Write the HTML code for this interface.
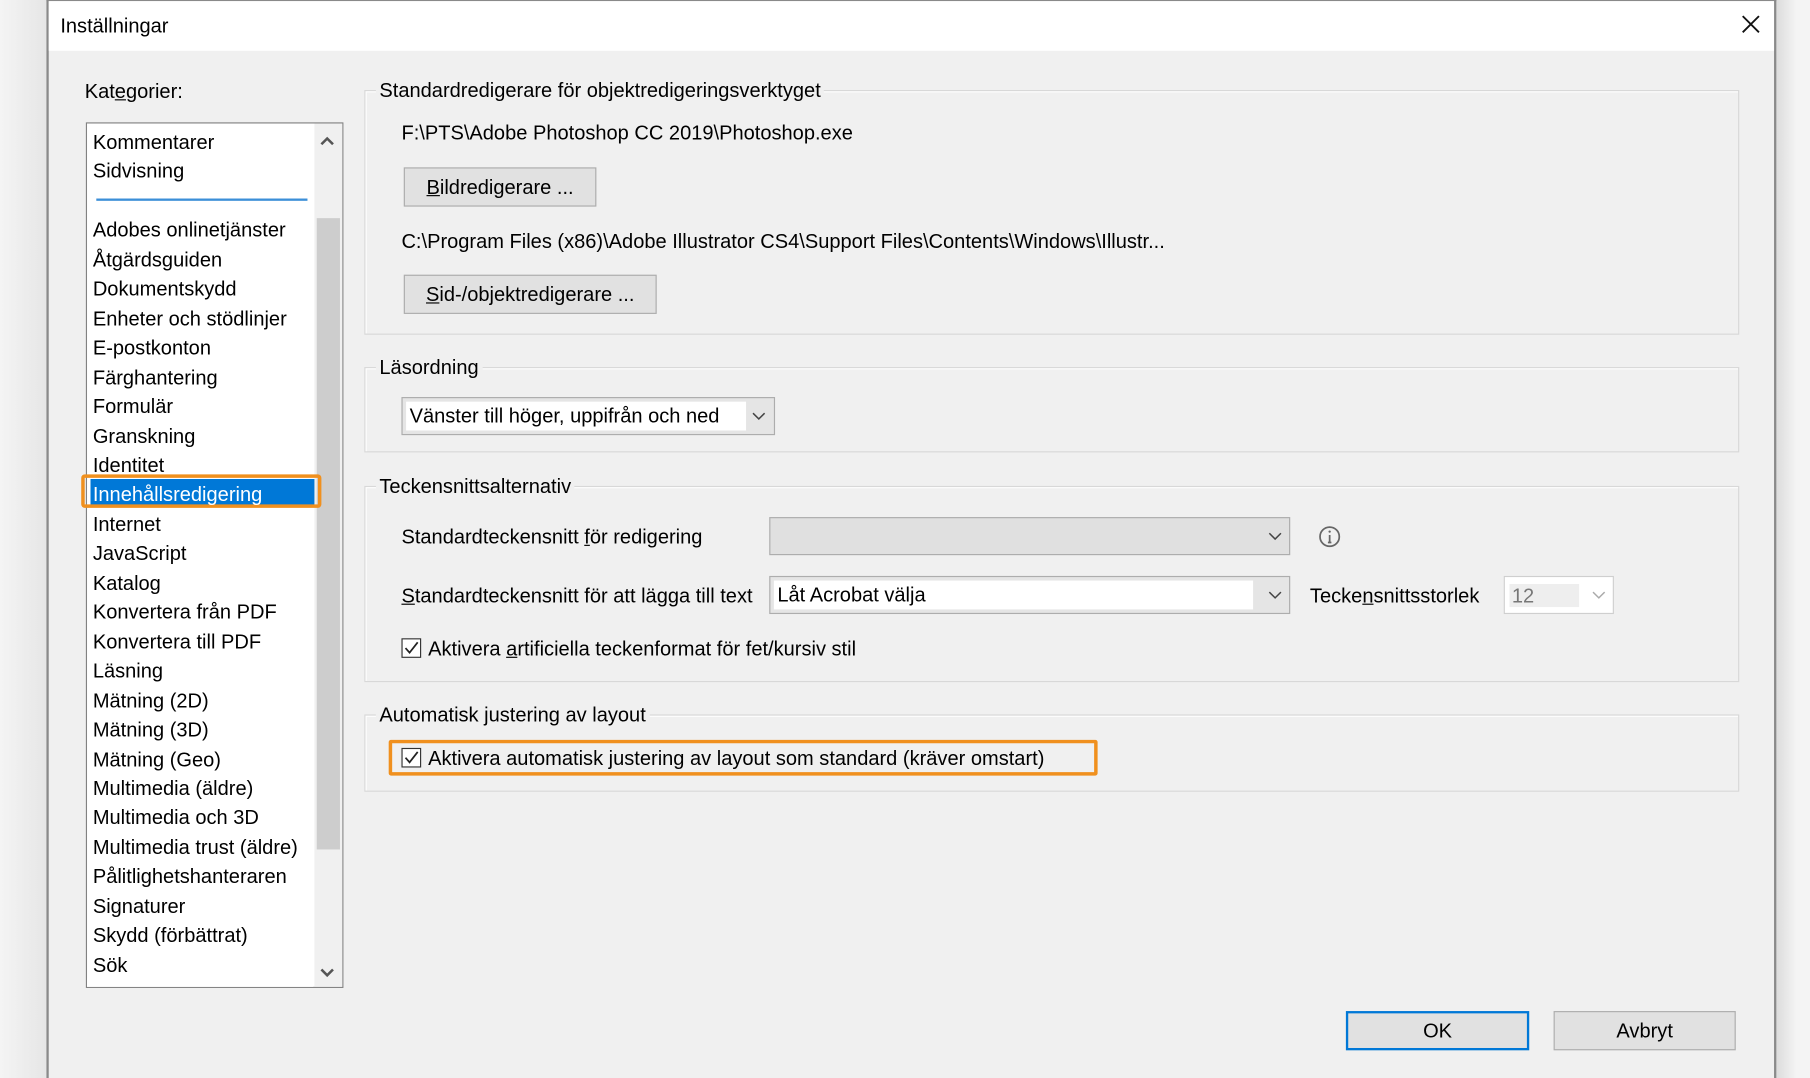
<!DOCTYPE html>
<html><head><meta charset="utf-8"><style>
html,body{margin:0;padding:0;width:1810px;height:1078px;overflow:hidden;background:#f3f3f3;}
#w{position:absolute;left:0;top:0;width:1560px;height:934px;transform-origin:0 0;transform:scale(1.16026,1.15418);font-family:"Liberation Sans",sans-serif;font-size:17.3px;color:#000;}
.a{position:absolute;white-space:nowrap;}
.t{line-height:20px;margin-top:-10px;}
.grp{position:absolute;border:1px solid #d8d8d8;box-shadow:inset 1px 1px 0 #fff;}
.lg{position:absolute;background:#f0f0f0;padding:0 3px;line-height:20px;top:-11px;left:9px;white-space:nowrap;}
.btn{position:absolute;background:#e1e1e1;border:1px solid #adadad;box-sizing:border-box;text-align:center;}
.cb{position:absolute;width:17px;height:17px;border:1px solid #333;background:#fff;box-sizing:border-box;}
u{text-decoration:underline;}
</style></head><body><div id="w">
<div class="a" style="left:0;top:0;width:40px;height:934px;background:linear-gradient(90deg,#f4f4f4,#e6e6e6);"></div>
<div class="a" style="left:1531px;top:0;width:29px;height:934px;background:linear-gradient(90deg,#dcdcdc,#f4f4f4 60%);"></div>
<div class="a" style="left:40px;top:0;width:1491px;height:934px;background:#f0f0f0;border-left:2px solid #8a8a8a;border-right:2px solid #8a8a8a;border-top:1px solid #8a8a8a;box-sizing:border-box;"></div>
<div class="a" style="left:42px;top:1px;width:1487px;height:43px;background:#fff;"></div>
<div class="a t" style="left:52px;top:22px;">Inställningar</div>
<svg class="a" style="left:1500px;top:12px" width="18" height="18"><path d="M2 2L16 16M16 2L2 16" stroke="#111" stroke-width="1.6"/></svg>

<div class="a t" style="left:73px;top:79px;">Kat<u>e</u>gorier:</div>
<div class="a" style="left:74px;top:106px;width:222px;height:750px;background:#fff;border:1px solid #828282;box-sizing:border-box;overflow:hidden;">
 <div class="a" style="left:196px;top:0;width:24px;height:748px;background:#f0f0f0;"></div>
 <div class="a" style="left:198px;top:82px;width:20px;height:547px;background:#cdcdcd;"></div>
 <svg class="a" style="left:200px;top:9px" width="14" height="12"><path d="M2 9L7 4L12 9" stroke="#555" stroke-width="2.2" fill="none"/></svg>
 <svg class="a" style="left:200px;top:730px" width="14" height="12"><path d="M2 3L7 8L12 3" stroke="#555" stroke-width="2.2" fill="none"/></svg>
 <div class="a" style="left:8px;top:65px;width:182px;height:2px;background:#3c8fd8;"></div>
 <div class="a" style="left:3px;top:308px;width:193px;height:23px;background:#0078d7;"></div>
</div>
<div class="a" style="left:70px;top:411px;width:207px;height:29px;border:3px solid #f0901e;border-radius:3px;box-sizing:border-box;"></div>
<div class="a" style="left:80px;top:111px;line-height:25.45px;">
Kommentarer<br>Sidvisning<br><br>Adobes onlinetjänster<br>Åtgärdsguiden<br>Dokumentskydd<br>Enheter och stödlinjer<br>E-postkonton<br>Färghantering<br>Formulär<br>Granskning<br>Identitet<br><span style="color:#fff">Innehållsredigering</span><br>Internet<br>JavaScript<br>Katalog<br>Konvertera från PDF<br>Konvertera till PDF<br>Läsning<br>Mätning (2D)<br>Mätning (3D)<br>Mätning (Geo)<br>Multimedia (äldre)<br>Multimedia och 3D<br>Multimedia trust (äldre)<br>Pålitlighetshanteraren<br>Signaturer<br>Skydd (förbättrat)<br>Sök
</div>
<div class="a" style="left:75px;top:848px;width:195px;height:7px;background:#fff;"></div>

<div class="grp" style="left:314px;top:78px;width:1183px;height:210px;"><div class="lg">Standardredigerare för objektredigeringsverktyget</div></div>
<div class="a t" style="left:346px;top:115px;">F:\PTS\Adobe Photoshop CC 2019\Photoshop.exe</div>
<div class="btn" style="left:348px;top:145px;width:166px;height:34px;line-height:32px;"><u>B</u>ildredigerare ...</div>
<div class="a t" style="left:346px;top:209px;">C:\Program Files (x86)\Adobe Illustrator CS4\Support Files\Contents\Windows\Illustr...</div>
<div class="btn" style="left:348px;top:238px;width:218px;height:34px;line-height:32px;"><u>S</u>id-/objektredigerare ...</div>

<div class="grp" style="left:314px;top:318px;width:1183px;height:72px;"><div class="lg">Läsordning</div></div>
<div class="a" style="left:346px;top:344px;width:322px;height:33px;background:#e5e5e5;border:1px solid #adadad;box-sizing:border-box;">
 <div class="a" style="left:3px;top:3px;width:293px;height:25px;background:#fff;"></div>
 <div class="a" style="left:6px;top:5px;line-height:20px;">Vänster till höger, uppifrån och ned</div>
 <svg class="a" style="left:300px;top:11px" width="14" height="10"><path d="M2 2L7 7L12 2" stroke="#444" stroke-width="1.3" fill="none"/></svg>
</div>

<div class="grp" style="left:314px;top:421px;width:1183px;height:168px;"><div class="lg">Teckensnittsalternativ</div></div>
<div class="a t" style="left:346px;top:465px;">Standardteckensnitt <u>f</u>ör redigering</div>
<div class="a" style="left:663px;top:448px;width:449px;height:33px;background:#e0e0e0;border:1px solid #adadad;box-sizing:border-box;">
 <svg class="a" style="left:428px;top:11px" width="14" height="10"><path d="M2 2L7 7L12 2" stroke="#444" stroke-width="1.3" fill="none"/></svg>
</div>
<svg class="a" style="left:1136px;top:455px" width="20" height="20"><circle cx="10" cy="10" r="8.3" stroke="#666" stroke-width="1.5" fill="none"/><path d="M10 8.5V15M8.5 15H11.5" stroke="#666" stroke-width="1.5"/><circle cx="10" cy="5.6" r="1" fill="#666"/></svg>
<div class="a t" style="left:346px;top:516px;"><u>S</u>tandardteckensnitt för att lägga till text</div>
<div class="a" style="left:663px;top:499px;width:449px;height:33px;background:#e5e5e5;border:1px solid #adadad;box-sizing:border-box;">
 <div class="a" style="left:3px;top:3px;width:413px;height:25px;background:#fff;"></div>
 <div class="a" style="left:6px;top:5px;line-height:20px;">Låt Acrobat välja</div>
 <svg class="a" style="left:428px;top:11px" width="14" height="10"><path d="M2 2L7 7L12 2" stroke="#444" stroke-width="1.3" fill="none"/></svg>
</div>
<div class="a t" style="left:1129px;top:516px;">Tecke<u>n</u>snittsstorlek</div>
<div class="a" style="left:1296px;top:499px;width:95px;height:33px;background:#fff;border:1px solid #cfcfcf;box-sizing:border-box;">
 <div class="a" style="left:4px;top:6px;width:60px;height:20px;background:#eeeeee;"></div>
 <div class="a" style="left:6px;top:6px;line-height:20px;color:#777;">12</div>
 <svg class="a" style="left:74px;top:11px" width="14" height="10"><path d="M2 2L7 7L12 2" stroke="#aaa" stroke-width="1.3" fill="none"/></svg>
</div>
<div class="cb" style="left:346px;top:553px;"><svg width="15" height="15" style="position:absolute;left:0;top:0"><path d="M2.5 7.5L6 11.5L13 2.5" stroke="#222" stroke-width="1.5" fill="none"/></svg></div>
<div class="a t" style="left:369px;top:562px;">Aktivera <u>a</u>rtificiella teckenformat för fet/kursiv stil</div>

<div class="grp" style="left:314px;top:619px;width:1183px;height:65px;"><div class="lg">Automatisk justering av layout</div></div>
<div class="cb" style="left:346px;top:648px;"><svg width="15" height="15" style="position:absolute;left:0;top:0"><path d="M2.5 7.5L6 11.5L13 2.5" stroke="#222" stroke-width="1.5" fill="none"/></svg></div>
<div class="a t" style="left:369px;top:657px;">Aktivera automatisk justering av layout som standard (kräver omstart)</div>
<div class="a" style="left:335px;top:641px;width:611px;height:31px;border:3px solid #f0901e;border-radius:2px;box-sizing:border-box;"></div>

<div class="btn" style="left:1160px;top:876px;width:158px;height:34px;line-height:30px;border:2px solid #0078d7;">OK</div>
<div class="btn" style="left:1339px;top:876px;width:157px;height:34px;line-height:32px;">Avbryt</div>
</div></body></html>
